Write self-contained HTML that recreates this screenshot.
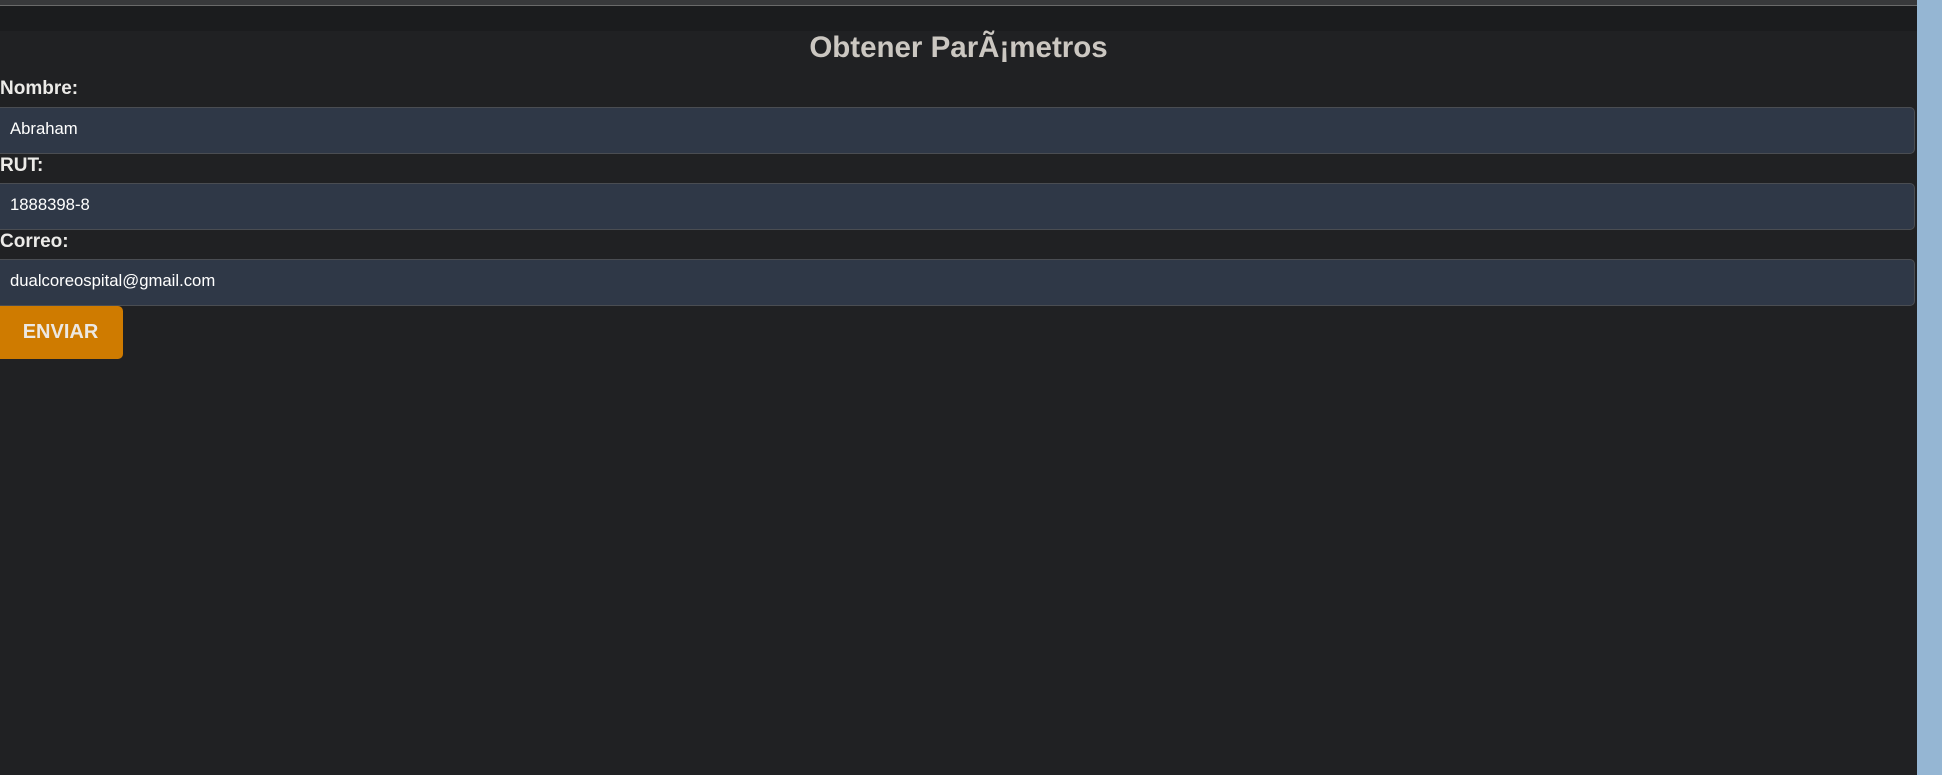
<!DOCTYPE html>
<html><head><meta charset="utf-8"><style>
html,body{margin:0;padding:0;width:1942px;height:775px;overflow:hidden;background:#202123;font-family:"Liberation Sans",Arial,sans-serif;}
.top{position:absolute;left:0;top:0;width:1917px;height:5px;background:#38393b;border-bottom:1px solid #6a6a6a;}
.band{position:absolute;left:0;top:6px;width:1917px;height:25px;background:#1b1c1e;}
.side{position:absolute;left:1917px;top:0;width:25px;height:775px;background:#95b6d3;}
h1{position:absolute;left:0;width:1917px;top:31px;margin:0;text-align:center;font-size:29.5px;font-weight:bold;color:#cbc7c1;line-height:34px;}
.lbl{position:absolute;left:0;font-size:19px;font-weight:bold;color:#ecebe8;line-height:20px;}
.inp{position:absolute;left:-6px;width:1921px;background:#2f3847;border:1px solid #4a4d52;border-radius:5px;box-sizing:border-box;height:47px;color:#fff;font-size:16.7px;line-height:42px;padding-left:15px;}
.btn{position:absolute;left:-6px;top:306px;width:129px;height:53px;background:#cf7b00;border-radius:5px;color:#ece8e2;font-weight:bold;font-size:20px;line-height:53px;text-align:center;padding-left:4px;box-sizing:border-box;}
</style></head><body>
<div class="top"></div><div class="band"></div><div class="side"></div>
<h1>Obtener ParÃ¡metros</h1>
<div class="lbl" style="top:79px">Nombre:</div>
<div class="inp" style="top:107px">Abraham</div>
<div class="lbl" style="top:156px">RUT:</div>
<div class="inp" style="top:183px">1888398-8</div>
<div class="lbl" style="top:232px">Correo:</div>
<div class="inp" style="top:259px">dualcoreospital@gmail.com</div>
<div class="btn">ENVIAR</div>
</body></html>
